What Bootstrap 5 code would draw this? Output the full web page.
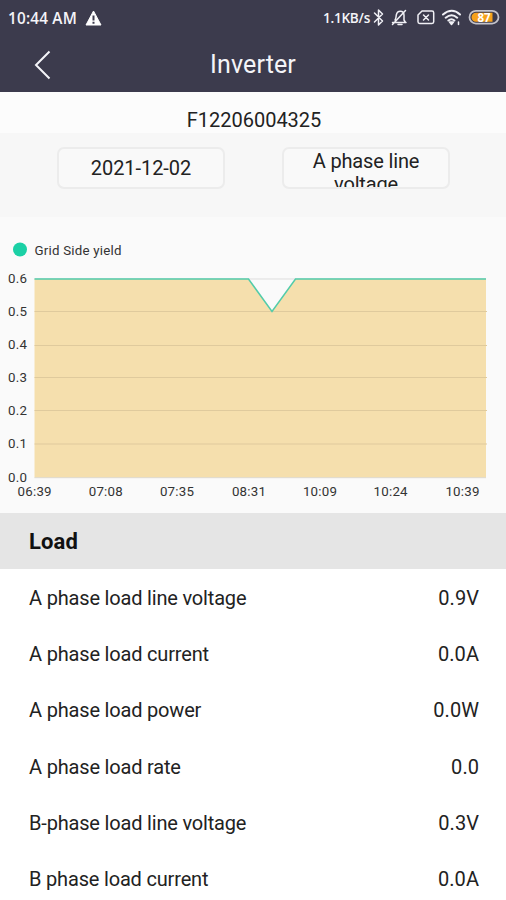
<!DOCTYPE html>
<html lang="en">
<head>
<meta charset="utf-8">
<meta name="viewport" content="width=device-width, initial-scale=1">
<title>Inverter</title>
<link href="https://cdn.jsdelivr.net/npm/bootstrap@5.3.0/dist/css/bootstrap.min.css" rel="stylesheet">
<style>
body{font-family:Roboto,"Liberation Sans",sans-serif;color:#222;background:#fff;height:900px;overflow:hidden}
.topbar{background:#3c3b4d;color:#f4f4f8;height:92px}
.status{height:36px;padding:0 0 0 8px;font:500 15px/36px "Open Sans",sans-serif}
.clock{font-size:15.3px;font-weight:600;width:69px;white-space:nowrap;letter-spacing:.2px}
.rate{font-size:13.6px;font-weight:600;white-space:nowrap;letter-spacing:-.25px}
.titlebar{height:56px;display:grid;grid-template-columns:84px 1fr 84px;align-items:center}
.titlebar h1{font-size:25px;font-weight:400;letter-spacing:.15px;line-height:58px}
.serial{height:41px;background:#fcfcfc;font-size:20px;line-height:57px;letter-spacing:0;padding-left:2px}
.filters{height:84px;background:#f7f7f7;padding:14px 56px 0 57px}
.picker{width:168px;height:42px;border:2px solid #ececec;border-radius:7px;background:#f9f9f9;color:#222;font-size:20px;letter-spacing:-.05px;line-height:23px;overflow:hidden}
.picker-wrap{letter-spacing:-.15px;padding-top:1px}
.chart{height:296px;background:#fafafa}
.chart text{font-size:13.3px;fill:#333;letter-spacing:.22px}
.section-head{height:56px;background:#e5e5e5;color:#111;font-size:22px;font-weight:700;letter-spacing:.1px;line-height:57px;padding-left:29px}
.reading{height:56.2px;padding:0 27px 0 29px;font-size:20px;line-height:58px;letter-spacing:-.18px}
.reading span:last-child{letter-spacing:.05px}
</style>
</head>
<body>
<header class="topbar">
  <div class="status d-flex align-items-center">
    <span class="clock">10:44 AM</span>
    <svg class="ms-2" width="17" height="16" viewBox="0 0 17 16"><path d="M8.5 1 16 15H1z" fill="#fff" stroke="#fff" stroke-linejoin="round"/><path d="M8.5 5.5v5M8.5 11.7v2" stroke="#3c3b4d" stroke-width="2"/></svg>
    <span class="rate ms-auto">1.1KB/s</span>
    <svg width="136" height="24" viewBox="370 6 136 24" fill="none" stroke="#f0f0f5" stroke-width="1.5" stroke-linecap="round" stroke-linejoin="round">
      <path d="m374.5 13 8 8-4 4V10l4 4-8 8"/>
      <path d="M392.500 22.500H406M395 20c1-1 1-3 1.300-5 .5-2.500 2-3.700 4-3.700 2.400 0 3.700 1.700 3.700 4V20l1.500 2.500M405.500 10.500l-13 14M398 24.500h4"/>
      <path d="M422 11h10q1.700 0 1.700 1.700v9q0 1.700-1.700 1.700h-12.300q-1.700 0-1.700-1.700V15zM423.500 15l5 5M428.500 15l-5 5"/>
      <path d="M443 14.500q9-7.500 17 0M445.700 17.700q6-5 11.500 0M448.400 20.500q3-2.500 6 0" stroke-width="2"/><path d="m449.500 22 4 0-2 2.500zM458.500 22v2.500" fill="#f0f0f5"/>
      <rect x="469.500" y="10.800" width="29" height="12.800" rx="6.400" stroke="#c4c3cb" stroke-width="1.800"/>
      <path d="M476 12.700h16.500v9H476a4.500 4.500 0 0 1 0-9" fill="#f6a11b" stroke="none"/>
      <text x="484" y="21.500" text-anchor="middle" font-size="11.500" font-weight="700" fill="#fff" stroke="none">87</text>
    </svg>
  </div>
  <div class="titlebar text-center">
    <svg width="84" height="56" viewBox="0 36 84 56" fill="none" stroke="#f4f4f8" stroke-width="2"><path d="M49.500 50.500 36 64l13.500 13.500"/></svg>
    <h1 class="m-0">Inverter</h1>
  </div>
</header>
<main>
  <div class="serial text-center">F12206004325</div>
  <div class="filters d-flex justify-content-between">
    <button type="button" class="picker p-0">2021-12-02</button>
    <div class="picker picker-wrap text-center px-4" role="button">A phase line voltage</div>
  </div>
  <svg class="chart d-block w-100" viewBox="0 217 506 296" role="img" aria-label="Grid Side yield">
    <circle cx="20" cy="249.500" r="7" fill="#1bd0a5"/>
    <text x="34.500" y="254.500">Grid Side yield</text>
    <path d="M34.500 279H486" stroke="#ddd"/>
    <path d="M34.500 279H248.500L272 311.500 295.500 279H486V477.500H34.500z" fill="#f5dfad"/>
    <path d="M34.500 311.500H487M34.500 345.500H487M34.500 377.500H487M34.500 410.500H487M34.500 444H487" stroke="#dfca9d" stroke-width="1.200"/>
    <path d="M34.500 477.700H486" stroke="#ddd8cc"/>
    <path d="M34.500 279H248.500L272 311.500 295.500 279H486" fill="none" stroke="#52ccaa" stroke-width="1.500"/>
    <g text-anchor="end">
      <text x="27.200" y="283.300">0.6</text><text x="27.200" y="316.300">0.5</text><text x="27.200" y="349.300">0.4</text><text x="27.200" y="382.300">0.3</text><text x="27.200" y="415.300">0.2</text><text x="27.200" y="448.300">0.1</text><text x="27.200" y="481.500">0.0</text>
    </g>
    <g text-anchor="middle">
      <text x="34.700" y="496">06:39</text><text x="105.800" y="496">07:08</text><text x="177" y="496">07:35</text><text x="249" y="496">08:31</text><text x="320" y="496">10:09</text><text x="390.700" y="496">10:24</text><text x="462.500" y="496">10:39</text>
    </g>
  </svg>
  <h2 class="section-head m-0">Load</h2>
  <div class="reading d-flex justify-content-between"><span>A phase load line voltage</span><span>0.9V</span></div>
  <div class="reading d-flex justify-content-between"><span>A phase load current</span><span>0.0A</span></div>
  <div class="reading d-flex justify-content-between"><span>A phase load power</span><span>0.0W</span></div>
  <div class="reading d-flex justify-content-between"><span>A phase load rate</span><span>0.0</span></div>
  <div class="reading d-flex justify-content-between"><span>B-phase load line voltage</span><span>0.3V</span></div>
  <div class="reading d-flex justify-content-between"><span>B phase load current</span><span>0.0A</span></div>
</main>
<script src="https://cdn.jsdelivr.net/npm/bootstrap@5.3.0/dist/js/bootstrap.bundle.min.js"></script>
</body>
</html>
